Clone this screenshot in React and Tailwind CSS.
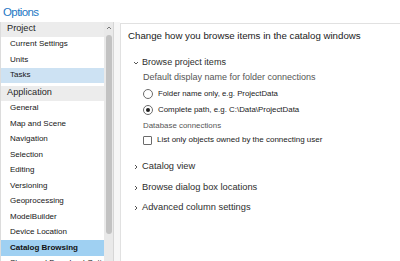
import React from 'react';

const projectItems = ['Current Settings', 'Units', 'Tasks'];
const appItems = [
  'General',
  'Map and Scene',
  'Navigation',
  'Selection',
  'Editing',
  'Versioning',
  'Geoprocessing',
  'ModelBuilder',
  'Device Location',
  'Catalog Browsing',
  'Share and Download Options',
];

const ChevronDown = () => (
  <svg width="6" height="6" viewBox="0 0 6 6" className="shrink-0">
    <polyline points="1,2 3,4 5,2" fill="none" stroke="#555" strokeWidth="1" />
  </svg>
);

const ChevronRight = () => (
  <svg width="6" height="6" viewBox="0 0 6 6" className="shrink-0">
    <polyline points="2,1 4,3 2,5" fill="none" stroke="#555" strokeWidth="1" />
  </svg>
);

const Radio = ({ checked }) => (
  <span className="w-[10px] h-[10px] rounded-full border border-[#6b6b6b] bg-white flex items-center justify-center shrink-0">
    {checked && <span className="w-[4px] h-[4px] rounded-full bg-[#1f1f1f]" />}
  </span>
);

const GroupHeader = ({ children }) => (
  <div className="h-[14.5px] flex items-center pl-[6px] bg-[#ececec] text-[9.2px] text-[#262626]">
    {children}
  </div>
);

const Item = ({ label, active }) => {
  // Tasks = soft selection, Catalog Browsing = current page
  let cls = 'text-[#161616]';
  if (active === 'soft') cls = 'bg-[#cde2f3] text-[#161616]';
  if (active === 'current') cls = 'bg-[#9fd0f2] text-[#111] font-bold text-[7.6px]';
  return (
    <div className={`h-[15.5px] flex items-center pl-[9px] text-[8px] whitespace-nowrap ${cls}`}>
      {label}
    </div>
  );
};

const Section = ({ label }) => (
  <div className="h-[20.5px] flex items-center gap-[3px] pl-[12px] text-[9.3px] text-[#2e2e2e]">
    <ChevronRight />
    <span>{label}</span>
  </div>
);

export default function App() {
  return (
    <div className="w-[400px] h-[261px] bg-white overflow-hidden font-['Liberation_Sans',Arial,sans-serif]">
      {/* title bar */}
      <div className="h-[22px] pl-[3px] pt-[5px] leading-[14px] text-[11.5px] tracking-[-0.6px] text-[#2277c4]">
        Options
      </div>

      <div className="flex h-[239px]">
        {/* left navigation list */}
        <div className="w-[104px] border-l border-[#dcdcdc] overflow-hidden">
          <GroupHeader>Project</GroupHeader>
          {projectItems.map((p) => (
            <Item key={p} label={p} active={p === 'Tasks' ? 'soft' : null} />
          ))}
          <div className="h-[3px]" />
          <GroupHeader>Application</GroupHeader>
          {appItems.map((a) => (
            <Item key={a} label={a} active={a === 'Catalog Browsing' ? 'current' : null} />
          ))}
        </div>

        {/* scrollbar */}
        <div className="w-[10px] bg-[#e9e9e9] border-r border-[#d6d6d6] flex flex-col items-center">
          <svg width="6" height="6" viewBox="0 0 6 6" className="mt-[3px]">
            <polyline points="1,4 3,2 5,4" fill="none" stroke="#777" strokeWidth="1" />
          </svg>
          <div className="mt-[4px] w-[6px] h-[199px] rounded-full bg-[#c2c2c2]" />
        </div>

        <div className="w-[6px] bg-[#f6f6f6]" />

        {/* right content panel */}
        <div className="flex-1 mt-px border-l border-t border-[#e1e1e1] bg-white">
          <div className="pt-[6px] pl-[7px] h-[12px] leading-[12px] box-content text-[9.7px] text-[#1a1a1a] whitespace-nowrap">
            Change how you browse items in the catalog windows
          </div>

          <div className="mt-[14px] h-[14px] flex items-center gap-[3px] pl-[12px] text-[9.05px] text-[#2e2e2e]">
            <ChevronDown />
            <span>Browse project items</span>
          </div>

          <div className="pl-[22px]">
            <div className="h-[16px] flex items-center text-[9px] text-[#555] whitespace-nowrap">
              Default display name for folder connections
            </div>
            <div className="h-[16px] flex items-center gap-[5px] text-[7.8px] text-[#1a1a1a] whitespace-nowrap">
              <Radio />
              <span>Folder name only, e.g. ProjectData</span>
            </div>
            <div className="h-[16px] flex items-center gap-[5px] text-[7.9px] text-[#1a1a1a] whitespace-nowrap">
              <Radio checked />
              <span>Complete path, e.g. C:\Data\ProjectData</span>
            </div>
            <div className="h-[16px] flex items-center text-[7.9px] text-[#555] whitespace-nowrap">
              Database connections
            </div>
            <div className="h-[12px] flex items-center gap-[5px] text-[8px] text-[#1a1a1a] whitespace-nowrap">
              <span className="w-[9px] h-[9px] border border-[#6b6b6b] rounded-[1px] bg-white shrink-0" />
              <span>List only objects owned by the connecting user</span>
            </div>
          </div>

          <div className="mt-[10.75px]">
            <Section label="Catalog view" />
            <Section label="Browse dialog box locations" />
            <Section label="Advanced column settings" />
          </div>
        </div>
      </div>
    </div>
  );
}
